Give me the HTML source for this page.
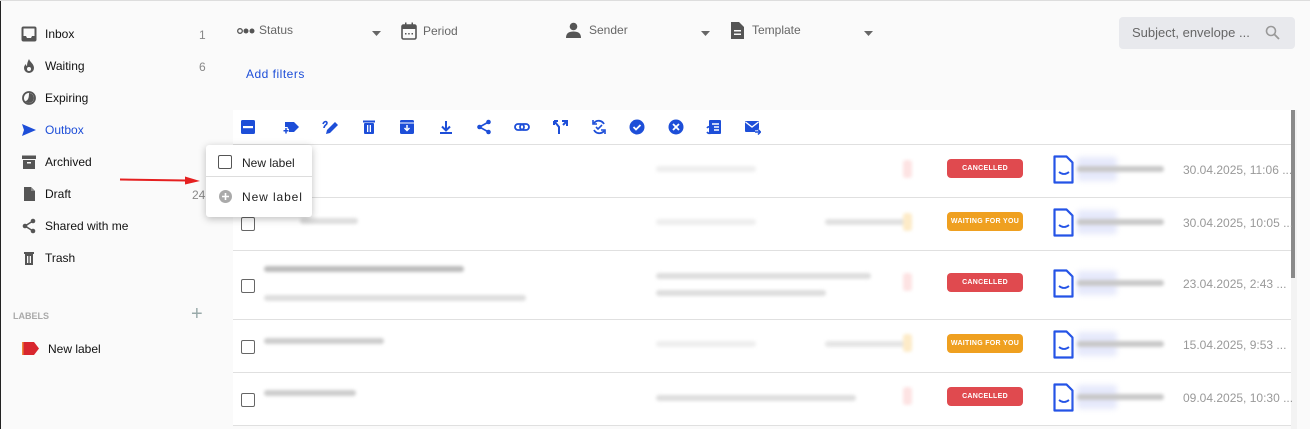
<!DOCTYPE html>
<html><head><meta charset="utf-8"><style>
*{box-sizing:border-box;margin:0;padding:0}
body{width:1310px;height:429px;overflow:hidden;background:#fafafa;font-family:"Liberation Sans",sans-serif;position:relative}
.a{position:absolute}
.nav{position:absolute;left:45px;font-size:12px;color:#111;line-height:14px}
.cnt{position:absolute;font-size:12px;color:#888}
.ic{position:absolute;left:21px;width:16px;height:16px}
.tb{position:absolute;top:119px;width:16px;height:16px}
.row{position:absolute;left:233px;width:1058px;background:#fff;border-bottom:1px solid #e0e0e0}
.cb{position:absolute;width:14px;height:14px;border:1.5px solid #666;border-radius:2px;background:#fff}
.bar{position:absolute;height:6px;border-radius:3px;filter:blur(1.5px)}
.badge{position:absolute;left:947px;width:76px;height:19px;border-radius:4px;color:#fff;font-size:7px;font-weight:bold;text-align:center;line-height:19px;letter-spacing:.3px}
.red{background:#e04a4f}.org{background:#efa020}
.date{position:absolute;left:1183px;font-size:12px;color:#999}
.doc{position:absolute;left:1053px;width:22px;height:29px}
.flt{position:absolute;top:23px;font-size:12px;color:#666}
</style></head><body>
<div class="a" style="left:0;top:0;width:1px;height:429px;background:#222"></div>
<div class="a" style="left:0;top:0;width:1310px;height:1px;background:#ddd"></div>

<!-- sidebar -->
<svg class="ic" style="top:26px" viewBox="0 0 16 16"><rect x="1.5" y="1.5" width="13" height="13" rx="1" fill="none" stroke="#555" stroke-width="2"/><path d="M2 10h3l1 2h4l1-2h3v5H2z" fill="#555"/></svg>
<div class="nav" style="top:27px">Inbox</div><div class="cnt" style="left:199px;top:28px">1</div>
<svg class="ic" style="top:58px" viewBox="0 0 16 16"><path d="M8 1c1 3 5 5 5 9a5 5 0 0 1-10 0c0-2 1-3 2-4 0 2 1 2 1 2 0-3 1-5 2-7z" fill="#555"/><circle cx="8" cy="11" r="2" fill="#fafafa"/></svg>
<div class="nav" style="top:59px">Waiting</div><div class="cnt" style="left:199px;top:60px">6</div>
<svg class="ic" style="top:90px" viewBox="0 0 16 16"><circle cx="8" cy="8" r="6" fill="none" stroke="#555" stroke-width="1.8"/><path d="M8 3a5 5 0 0 1 0 10a5 5 0 0 1-4-2c3 0 4-3 4-8z" fill="#555"/></svg>
<div class="nav" style="top:91px">Expiring</div>
<svg class="ic" style="top:122px" viewBox="0 0 16 16"><path d="M1 2l14 6-14 6 2-6z" fill="#1d4ed8"/></svg>
<div class="nav" style="top:123px;color:#1d4ed8">Outbox</div>
<svg class="ic" style="top:154px" viewBox="0 0 16 16"><rect x="1" y="1.5" width="14" height="3.5" fill="#555"/><rect x="2" y="6" width="12" height="9" fill="#555"/><rect x="6" y="8" width="4" height="1.5" fill="#fafafa"/></svg>
<div class="nav" style="top:155px">Archived</div>
<svg class="ic" style="top:186px" viewBox="0 0 16 16"><path d="M3 1h7l4 4v10H3z" fill="#555"/><path d="M10 1v4h4" fill="#888"/></svg>
<div class="nav" style="top:187px">Draft</div><div class="cnt" style="left:192px;top:188px">24</div>
<svg class="ic" style="top:218px" viewBox="0 0 16 16"><circle cx="12" cy="3" r="2.3" fill="#555"/><circle cx="4" cy="8" r="2.3" fill="#555"/><circle cx="12" cy="13" r="2.3" fill="#555"/><path d="M12 3L4 8l8 5" stroke="#555" stroke-width="1.5" fill="none"/></svg>
<div class="nav" style="top:219px">Shared with me</div>
<svg class="ic" style="top:250px" viewBox="0 0 16 16"><rect x="3" y="2" width="10" height="2" fill="#555"/><rect x="4" y="4" width="8" height="11" fill="#555"/><rect x="6" y="6" width="1.3" height="7" fill="#fafafa"/><rect x="8.7" y="6" width="1.3" height="7" fill="#fafafa"/></svg>
<div class="nav" style="top:251px">Trash</div>
<div class="a" style="left:13px;top:311px;font-size:9px;font-weight:bold;color:#aaa">LABELS</div>
<div class="a" style="left:191px;top:304px;font-size:20px;color:#9aa;line-height:20px">+</div>
<svg class="a" style="left:22px;top:342px" width="17" height="13" viewBox="0 0 17 13"><path d="M0 0h12l5 6.5-5 6.5H0z" fill="#d8262e"/><rect width="1.5" height="13" fill="#f08a3c"/></svg>
<div class="nav" style="left:48px;top:342px">New label</div>

<!-- filters -->
<svg class="a" style="left:237px;top:27px" width="18" height="8"><circle cx="3" cy="4" r="2.3" fill="none" stroke="#555" stroke-width="1.3"/><circle cx="9" cy="4" r="2.5" fill="#555"/><circle cx="15" cy="4" r="2.5" fill="#555"/></svg>
<div class="flt" style="left:259px">Status</div>
<svg class="a" style="left:372px;top:31px" width="9" height="5"><path d="M0 0h9L4.5 5z" fill="#666"/></svg>
<svg class="a" style="left:401px;top:22px" width="16" height="18" viewBox="0 0 16 18"><rect x="1" y="3" width="14" height="14" rx="1.5" fill="none" stroke="#555" stroke-width="1.6"/><rect x="1" y="3" width="14" height="4" fill="#555"/><rect x="4" y="0.5" width="1.5" height="4" fill="#555"/><rect x="10.5" y="0.5" width="1.5" height="4" fill="#555"/><rect x="4" y="11" width="1.5" height="1.5" fill="#555"/><rect x="7.2" y="11" width="1.5" height="1.5" fill="#555"/><rect x="10.5" y="11" width="1.5" height="1.5" fill="#555"/></svg>
<div class="flt" style="left:423px;top:24px">Period</div>
<svg class="a" style="left:566px;top:22px" width="15" height="16" viewBox="0 0 15 16"><circle cx="7.5" cy="4.5" r="3.8" fill="#555"/><path d="M0 16c0-5 3-6.5 7.5-6.5S15 11 15 16z" fill="#555"/></svg>
<div class="flt" style="left:589px">Sender</div>
<svg class="a" style="left:701px;top:31px" width="9" height="5"><path d="M0 0h9L4.5 5z" fill="#666"/></svg>
<svg class="a" style="left:731px;top:22px" width="13" height="17" viewBox="0 0 13 17"><path d="M0 0h8l5 5v12H0z" fill="#555"/><rect x="3" y="8" width="7" height="1.5" fill="#fafafa"/><rect x="3" y="11.5" width="7" height="1.5" fill="#fafafa"/></svg>
<div class="flt" style="left:752px">Template</div>
<svg class="a" style="left:864px;top:31px" width="9" height="5"><path d="M0 0h9L4.5 5z" fill="#666"/></svg>
<div class="a" style="left:246px;top:67px;font-size:12px;color:#1d4ed8;letter-spacing:.5px">Add filters</div>
<div class="a" style="left:1119px;top:17px;width:176px;height:32px;background:#e8e9ed;border-radius:4px"></div>
<div class="a" style="left:1132px;top:25px;font-size:13px;color:#666">Subject, envelope ...</div>
<svg class="a" style="left:1265px;top:25px" width="15" height="15"><circle cx="6" cy="6" r="4.5" fill="none" stroke="#999" stroke-width="1.6"/><path d="M9.5 9.5L14 14" stroke="#999" stroke-width="1.8"/></svg>

<!-- table -->
<div class="row" style="top:110px;height:35px"></div>
<div class="row" style="top:145px;height:53px"></div>
<div class="row" style="top:198px;height:53px"></div>
<div class="row" style="top:251px;height:69px"></div>
<div class="row" style="top:320px;height:53px"></div>
<div class="row" style="top:373px;height:53px"></div>
<div class="a" style="left:1291px;top:110px;width:6px;height:319px;background:#f3f3f3"></div>
<div class="a" style="left:1291px;top:110px;width:4px;height:168px;background:#8a8a8a"></div>

<!-- toolbar icons -->
<svg class="tb" style="left:240px" viewBox="0 0 16 16"><rect x="1" y="1" width="14" height="14" rx="1.5" fill="#1d4ed8"/><rect x="3" y="7" width="10" height="2.2" fill="#fff"/></svg>
<svg class="tb" style="left:283px" viewBox="0 0 16 16"><path d="M2 3h9l5 5-5 5H2z" fill="#1d4ed8"/><path d="M3 8v7M0 11.5h6" stroke="#fff" stroke-width="3.5"/><path d="M3 9v5.5M.5 11.7h5" stroke="#1d4ed8" stroke-width="1.5"/></svg>
<svg class="tb" style="left:322px" viewBox="0 0 16 16"><path d="M4 15l1-4 8-8 3 3-8 8z" fill="#1d4ed8"/><path d="M1 5c1-3 4-3 4-1s-3 2-3 5" stroke="#1d4ed8" stroke-width="1.6" fill="none"/></svg>
<svg class="tb" style="left:361px" viewBox="0 0 16 16"><rect x="2" y="1.5" width="12" height="2" fill="#1d4ed8"/><rect x="3" y="4" width="10" height="11" rx="1" fill="#1d4ed8"/><rect x="6" y="6" width="1.3" height="7" fill="#fff"/><rect x="8.7" y="6" width="1.3" height="7" fill="#fff"/></svg>
<svg class="tb" style="left:399px" viewBox="0 0 16 16"><rect x="1" y="1" width="14" height="14" rx="1.5" fill="#1d4ed8"/><rect x="1" y="3.5" width="14" height="1" fill="#fff"/><path d="M8 6v5M5.5 9L8 11.5 10.5 9" stroke="#fff" stroke-width="1.5" fill="none"/></svg>
<svg class="tb" style="left:438px" viewBox="0 0 16 16"><path d="M8 2v9M4 7.5L8 11.5 12 7.5M2 14h12" stroke="#1d4ed8" stroke-width="2" fill="none"/></svg>
<svg class="tb" style="left:476px" viewBox="0 0 16 16"><circle cx="12.5" cy="3" r="2.3" fill="#1d4ed8"/><circle cx="3.5" cy="8" r="2.3" fill="#1d4ed8"/><circle cx="12.5" cy="13" r="2.3" fill="#1d4ed8"/><path d="M12.5 3L3.5 8l9 5" stroke="#1d4ed8" stroke-width="1.6" fill="none"/></svg>
<svg class="tb" style="left:514px" viewBox="0 0 16 16"><rect x="1" y="5" width="9" height="6" rx="3" fill="none" stroke="#1d4ed8" stroke-width="1.8"/><rect x="6" y="5" width="9" height="6" rx="3" fill="none" stroke="#1d4ed8" stroke-width="1.8"/></svg>
<svg class="tb" style="left:553px" viewBox="0 0 16 16"><path d="M6 15V8L2 3M10 6l4-4M9 2h5v5M1 2v4M1 2h4" stroke="#1d4ed8" stroke-width="2" fill="none"/></svg>
<svg class="tb" style="left:591px" viewBox="0 0 16 16"><path d="M13 5A6 6 0 0 0 3 4M3 11a6 6 0 0 0 10 1" stroke="#1d4ed8" stroke-width="1.8" fill="none"/><path d="M2 1v4h4M14 15v-4h-4" stroke="#1d4ed8" stroke-width="1.6" fill="none"/><path d="M5 8l2 2 4-4" stroke="#1d4ed8" stroke-width="1.6" fill="none"/></svg>
<svg class="tb" style="left:629px" viewBox="0 0 16 16"><circle cx="8" cy="8" r="7.5" fill="#1d4ed8"/><path d="M4.5 8l2.5 2.5 4.5-4.5" stroke="#fff" stroke-width="1.8" fill="none"/></svg>
<svg class="tb" style="left:668px" viewBox="0 0 16 16"><circle cx="8" cy="8" r="7.5" fill="#1d4ed8"/><path d="M5 5l6 6M11 5l-6 6" stroke="#fff" stroke-width="1.8"/></svg>
<svg class="tb" style="left:706px" viewBox="0 0 16 16"><rect x="3" y="1" width="12" height="14" rx="1" fill="#1d4ed8"/><path d="M6 5h7M8 8h5M8 11h5" stroke="#fff" stroke-width="1.4"/><path d="M1 9a3 3 0 0 1 5 0M6 13a3 3 0 0 1-5 0" stroke="#1d4ed8" stroke-width="1.6" fill="none"/></svg>
<svg class="tb" style="left:745px" viewBox="0 0 16 16"><rect x="0" y="2" width="14" height="11" rx="1" fill="#1d4ed8"/><path d="M0.5 3l6.5 5 6.5-5" stroke="#fff" stroke-width="1.4" fill="none"/><path d="M10 13h5M13 10.5l2.5 2.5-2.5 2.5" stroke="#fff" stroke-width="3.2" fill="none"/><path d="M10 13h5M13 10.5l2.5 2.5-2.5 2.5" stroke="#1d4ed8" stroke-width="1.5" fill="none"/></svg>

<!-- rows content -->
<div class="cb" style="left:241px;top:217px"></div>
<div class="cb" style="left:241px;top:279px"></div>
<div class="cb" style="left:241px;top:340px"></div>
<div class="cb" style="left:241px;top:393px"></div>

<div class="bar" style="left:656px;top:166px;width:100px;background:#eee"></div>
<div class="bar" style="left:903px;top:160px;width:9px;height:18px;background:#fde3e3"></div>
<div class="bar" style="left:300px;top:218px;width:58px;background:#ddd"></div>
<div class="bar" style="left:656px;top:219px;width:100px;background:#eee"></div>
<div class="bar" style="left:825px;top:219px;width:85px;background:#e0e0e0"></div>
<div class="bar" style="left:903px;top:213px;width:9px;height:18px;background:#fdebc8"></div>
<div class="bar" style="left:264px;top:266px;width:200px;background:#bbb"></div>
<div class="bar" style="left:264px;top:295px;width:262px;background:#ddd"></div>
<div class="bar" style="left:656px;top:273px;width:215px;background:#ddd"></div>
<div class="bar" style="left:656px;top:290px;width:170px;background:#ddd"></div>
<div class="bar" style="left:903px;top:273px;width:9px;height:18px;background:#fde3e3"></div>
<div class="bar" style="left:264px;top:338px;width:120px;background:#ccc"></div>
<div class="bar" style="left:656px;top:341px;width:100px;background:#eee"></div>
<div class="bar" style="left:825px;top:341px;width:85px;background:#e5e5e5"></div>
<div class="bar" style="left:903px;top:334px;width:9px;height:18px;background:#fdebc8"></div>
<div class="bar" style="left:264px;top:390px;width:92px;background:#ccc"></div>
<div class="bar" style="left:656px;top:395px;width:200px;background:#ddd"></div>
<div class="bar" style="left:903px;top:387px;width:9px;height:18px;background:#fde3e3"></div>

<div class="badge red" style="top:159px">CANCELLED</div>
<div class="badge org" style="top:212px">WAITING FOR YOU</div>
<div class="badge red" style="top:273px">CANCELLED</div>
<div class="badge org" style="top:334px">WAITING FOR YOU</div>
<div class="badge red" style="top:387px">CANCELLED</div>

<svg width="0" height="0" style="position:absolute"><defs><g id="d"><path d="M1.5 1.5h12l6 6v20h-18z" fill="#fff" stroke="#2453e6" stroke-width="2.2" stroke-linejoin="round"/><path d="M6 17q5 4 10 0" stroke="#2453e6" stroke-width="1.8" fill="none"/></g></defs></svg>
<svg class="doc" style="top:155px" viewBox="0 0 22 29"><use href="#d"/></svg>
<svg class="doc" style="top:208px" viewBox="0 0 22 29"><use href="#d"/></svg>
<svg class="doc" style="top:269px" viewBox="0 0 22 29"><use href="#d"/></svg>
<svg class="doc" style="top:330px" viewBox="0 0 22 29"><use href="#d"/></svg>
<svg class="doc" style="top:383px" viewBox="0 0 22 29"><use href="#d"/></svg>
<div class="bar" style="left:1077px;top:157px;width:40px;height:24px;background:#e6e9fb;filter:blur(3px)"></div>
<div class="bar" style="left:1077px;top:166px;width:87px;background:#c8c8c8"></div>
<div class="bar" style="left:1077px;top:210px;width:40px;height:24px;background:#e6e9fb;filter:blur(3px)"></div>
<div class="bar" style="left:1077px;top:219px;width:87px;background:#c8c8c8"></div>
<div class="bar" style="left:1077px;top:271px;width:40px;height:24px;background:#e6e9fb;filter:blur(3px)"></div>
<div class="bar" style="left:1077px;top:280px;width:87px;background:#c8c8c8"></div>
<div class="bar" style="left:1077px;top:332px;width:40px;height:24px;background:#e6e9fb;filter:blur(3px)"></div>
<div class="bar" style="left:1077px;top:341px;width:87px;background:#c8c8c8"></div>
<div class="bar" style="left:1077px;top:385px;width:40px;height:24px;background:#e6e9fb;filter:blur(3px)"></div>
<div class="bar" style="left:1077px;top:394px;width:87px;background:#c8c8c8"></div>

<div class="date" style="top:163px">30.04.2025, 11:06 ...</div>
<div class="date" style="top:216px">30.04.2025, 10:05 ...</div>
<div class="date" style="top:277px">23.04.2025, 2:43 ...</div>
<div class="date" style="top:338px">15.04.2025, 9:53 ...</div>
<div class="date" style="top:391px">09.04.2025, 10:30 ...</div>

<!-- popup -->
<div class="a" style="left:206px;top:145px;width:106px;height:72px;background:#fff;border-radius:3px;box-shadow:0 2px 8px rgba(0,0,0,.25)"></div>
<div class="cb" style="left:218px;top:155px;border-width:1px;border-color:#555"></div>
<div class="a" style="left:242px;top:156px;font-size:12px;color:#222">New label</div>
<div class="a" style="left:206px;top:176px;width:106px;height:1px;background:#ddd"></div>
<svg class="a" style="left:219px;top:190px" width="13" height="13"><circle cx="6.5" cy="6.5" r="6.5" fill="#aaa"/><path d="M6.5 3v7M3 6.5h7" stroke="#fff" stroke-width="1.6"/></svg>
<div class="a" style="left:242px;top:190px;font-size:12px;color:#222;letter-spacing:.9px">New label</div>

<!-- arrow -->
<svg class="a" style="left:119px;top:174px" width="82" height="12"><path d="M1 5.5l66 1" stroke="#e52020" stroke-width="2"/><path d="M66 2.5l15 4.5-15 3.5z" fill="#e52020"/></svg>
</body></html>
